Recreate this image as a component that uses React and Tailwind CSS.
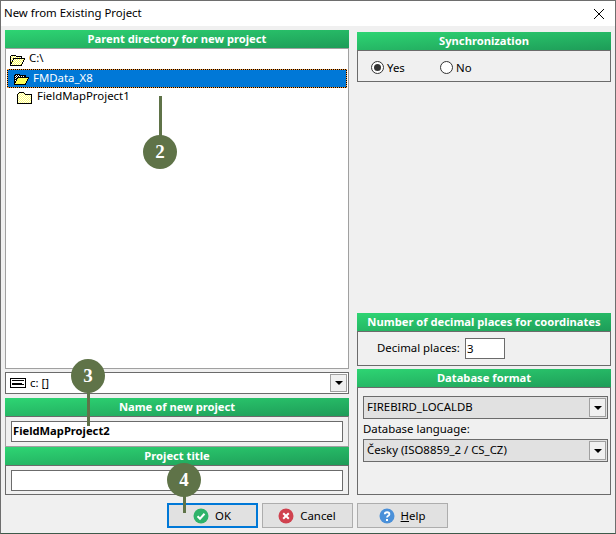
const FONT = "font-['Noto_Sans','Liberation_Sans',sans-serif]";

function Header({ children, className = "" }) {
  return (
    <div className={`h-[18px] flex items-center justify-center bg-gradient-to-br from-[#2ed573] to-[#1e9c58] text-white font-bold text-[11.2px] leading-none ${className}`}>
      {children}
    </div>
  );
}

function DotPattern({ id, a = "#ffff55", b = "#ffffff" }) {
  return (
    <defs>
      <pattern id={id} width="2" height="2" patternUnits="userSpaceOnUse">
        <rect width="2" height="2" fill={a} />
        <rect width="1" height="1" fill={b} />
        <rect x="1" y="1" width="1" height="1" fill={b} />
      </pattern>
    </defs>
  );
}

function OpenFolder({ id, selected }) {
  return (
    <svg width="16" height="12" viewBox="0 0 16 12" shapeRendering="crispEdges" className="shrink-0">
      <DotPattern id={id} b={selected ? "#000000" : "#ffffff"} a={selected ? "#ffffff" : "#ffff55"} />
      <path d="M1.5 11.5V2.5L2.5 1.5H6.5L7.5 2.5H12.5V4.5H4.5V11.5Z" fill={`url(#${id})`} stroke="#000" />
      <path d="M1.5 11.5L4.5 4.5H15.5L12.5 11.5Z" fill={selected ? "#ffff55" : `url(#${id})`} stroke="#000" />
    </svg>
  );
}

function ClosedFolder({ id }) {
  return (
    <svg width="15" height="12" viewBox="0 0 15 12" shapeRendering="crispEdges" className="shrink-0">
      <DotPattern id={id} a="#ffff77" />
      <path d="M0.5 11.5V2.5L2.5 0.5H6.5L8.5 2.5H14.5V11.5Z" fill={`url(#${id})`} stroke="#000" />
    </svg>
  );
}

function ComboArrow() {
  return (
    <div className="w-[17px] self-stretch m-px bg-[#f0f0f0] border border-[#a0a0a0] flex items-center justify-center">
      <div className="w-0 h-0 border-l-[4px] border-r-[4px] border-t-[4px] border-l-transparent border-r-transparent border-t-black" />
    </div>
  );
}

function Select({ children }) {
  return (
    <div className="h-[23px] flex items-center bg-[#e1e1e1] border border-[#6b6b6b] text-[11.4px] text-black">
      <span className="pl-[3px] pb-[2px] flex-1 leading-none">{children}</span>
      <ComboArrow />
    </div>
  );
}

function Button({ icon, children, active }) {
  return (
    <div className={`w-[91px] h-[25px] flex items-center justify-center gap-[6px] bg-[#e1e1e1] text-[11.4px] text-black ${active ? "border-2 border-[#0078d7]" : "border border-[#adadad]"}`}>
      {icon}
      <span>{children}</span>
    </div>
  );
}

function Badge({ n, className }) {
  return (
    <div className={`absolute w-[34px] h-[34px] rounded-full bg-[#5f7348] flex items-center justify-center text-white font-bold text-[19px] font-['Liberation_Serif',serif] ${className}`}>
      {n}
    </div>
  );
}

function Line({ className }) {
  return <div className={`absolute w-[3px] bg-[#5f7348] ${className}`} />;
}

export default function App() {
  return (
    <div className={`relative w-[616px] h-[534px] bg-[#f0f0f0] border border-[#6e6e6e] border-b-[#3d5a4a] overflow-hidden ${FONT}`}>
      <div className="h-[25px] bg-white flex items-center justify-between pl-[3px] pr-[10px] text-[11.4px] text-black">
        <span className="pb-[2px]">New from Existing Project</span>
        <svg width="12" height="12" viewBox="0 0 12 12"><path d="M1 1L11 11M11 1L1 11" stroke="#000" strokeWidth="1" fill="none" /></svg>
      </div>

      <div className="flex pl-[4px] pt-[4px] gap-[8px]">
        <div className="w-[344px] flex flex-col">
          <Header>Parent directory for new project</Header>
          <div className="h-[321px] bg-white border border-[#a0a0a0] text-[11.4px] text-black leading-none pt-[1px]">
            <div className="h-[19px] flex items-center gap-[4px] pl-[3px]">
              <OpenFolder id="f1" />
              <span className="pb-[3px]">C:\</span>
            </div>
            <div className="h-[19px] mx-px bg-black border border-dotted border-[#ffa040]">
              <div className="h-full flex items-center gap-[4px] pl-[5px] bg-[#0078d7] text-white">
                <OpenFolder id="f2" selected />
                <span className="pb-[2px]">FMData_X8</span>
              </div>
            </div>
            <div className="h-[19px] flex items-center gap-[5px] pl-[11px]">
              <ClosedFolder id="f3" />
              <span className="pb-[3px]">FieldMapProject1</span>
            </div>
          </div>
          <div className="mt-[3px] h-[22px] flex items-center bg-white border border-[#6b6b6b] text-[11.4px] text-black">
            <svg width="16" height="10" viewBox="0 0 16 10" className="ml-[4px] mr-[4px]" shapeRendering="crispEdges">
              <rect x="0.5" y="0.5" width="15" height="9" fill="#fff" stroke="#000" />
              <rect x="2" y="2" width="12" height="1" fill="#000" />
              <rect x="2" y="5" width="12" height="2" fill="#000" />
              <rect x="12" y="5" width="2" height="1" fill="#fff" />
            </svg>
            <span className="flex-1 leading-none">c: []</span>
            <ComboArrow />
          </div>
          <Header className="mt-[4px]">Name of new project</Header>
          <div className="h-[31px] border border-[#a0a0a0] border-t-[#6b6b6b] px-[5px] flex items-center">
            <div className="w-full h-[21px] bg-white border border-[#6b6b6b] flex items-center pl-px font-bold text-[11.2px] text-black">FieldMapProject2</div>
          </div>
          <Header>Project title</Header>
          <div className="h-[30px] border border-[#6b6b6b] px-[5px] flex items-center">
            <div className="w-full h-[21px] bg-white border border-[#6b6b6b]" />
          </div>
        </div>

        <div className="w-[254px] pt-[2px] flex flex-col h-[465px]">
          <Header>Synchronization</Header>
          <div className="h-[32px] border border-[#6b6b6b] flex items-center pl-[13px] pt-[3px] text-[11.4px] text-black">
            <div className="w-[13px] h-[13px] rounded-full bg-white border border-[#333] flex items-center justify-center">
              <div className="w-[7px] h-[7px] rounded-full bg-[#333]" />
            </div>
            <span className="ml-[3px] w-[53px]">Yes</span>
            <div className="w-[13px] h-[13px] rounded-full bg-white border border-[#333]" />
            <span className="ml-[3px]">No</span>
          </div>
          <div className="flex-1" />
          <Header>Number of decimal places for coordinates</Header>
          <div className="h-[35px] border border-[#6b6b6b] flex items-center pl-[19px] text-[11.4px] text-black">
            <span className="w-[88px] pb-[2px]">Decimal places:</span>
            <div className="w-[40px] h-[21px] bg-white border border-[#6b6b6b] flex items-center pl-px">3</div>
          </div>
          <Header className="mt-[3px]">Database format</Header>
          <div className="h-[108px] border border-[#6b6b6b] pl-[5px] pr-[2px] pt-[8px] text-[11.4px] text-black">
            <Select>FIREBIRD_LOCALDB</Select>
            <div className="h-[20px] flex items-center leading-none">Database language:</div>
            <Select>Česky (ISO8859_2 / CS_CZ)</Select>
          </div>
        </div>
      </div>

      <div className="flex justify-center gap-[4px] mt-[8px] -translate-x-[1px]">
        <Button active icon={
          <svg width="16" height="16" viewBox="0 0 16 16"><circle cx="8" cy="8" r="7.5" fill="#2fb36a" /><path d="M4.5 8.2L7 10.7L11.5 5.8" stroke="#fff" strokeWidth="2" fill="none" /></svg>
        }>OK</Button>
        <Button icon={
          <svg width="16" height="16" viewBox="0 0 16 16"><circle cx="8" cy="8" r="7.5" fill="#d0424f" /><path d="M5.2 5.2L10.8 10.8M10.8 5.2L5.2 10.8" stroke="#fff" strokeWidth="2" fill="none" /></svg>
        }>Cancel</Button>
        <Button icon={
          <svg width="16" height="16" viewBox="0 0 16 16"><circle cx="8" cy="8" r="7.5" fill="#4a90d9" /><path d="M5.8 6.2C5.8 3.6 10.4 3.6 10.4 6.2C10.4 7.9 8 7.8 8 9.6" stroke="#fff" strokeWidth="1.8" fill="none" /><rect x="7" y="11" width="2" height="2" fill="#fff" /></svg>
        }><span className="underline">H</span>elp</Button>
      </div>

      <Line className="left-[158px] top-[95px] h-[40px]" />
      <Badge n="2" className="left-[142px] top-[134px]" />
      <Line className="left-[86px] top-[390px] h-[35px]" />
      <Badge n="3" className="left-[70px] top-[358px]" />
      <Line className="left-[182px] top-[490px] h-[22px]" />
      <Badge n="4" className="left-[166px] top-[462px]" />
    </div>
  );
}
